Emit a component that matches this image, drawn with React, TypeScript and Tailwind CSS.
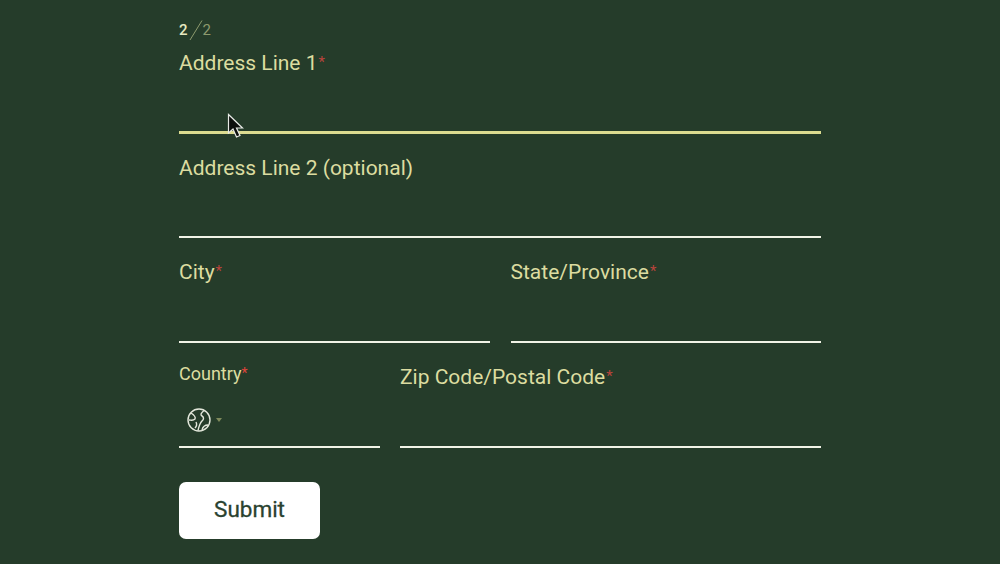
import React from 'react';

const font = { fontFamily: 'Roboto, "Liberation Sans", sans-serif' };

function Field({ label, optional, className, active, lineGap }: { label: string; optional?: boolean; className?: string; active?: boolean; lineGap?: string }) {
  return (
    <div className={`flex flex-col ${className ?? ''}`}>
      <div className="h-[28px] text-[21px] leading-[28px] text-[#dcdca0] whitespace-nowrap">
        {label}
        {!optional && <span className="relative -top-[3px] ml-[1px] text-[15px] leading-[15px] text-[#b9443c]">*</span>}
      </div>
      <div className={active ? 'mt-[54px] h-[3px] bg-[#dcdc90]' : `${lineGap ?? 'mt-[55px]'} h-[2px] bg-[#f1f3e6]`} />
    </div>
  );
}

export default function App() {
  return (
    <div className="relative h-[564px] w-[1000px] overflow-hidden bg-[#253c2a]" style={font}>
      <div className="mx-auto flex w-[642px] flex-col pt-[16px]">
        <div className="flex h-[33px] items-start pt-[4px] text-[15px] leading-[20px]">
          <span className="font-medium text-[#e6e8c0]">2</span>
          <svg width="15" height="20" viewBox="0 0 15 20">
            <path d="M2 20 L14 0.5" stroke="#8d9a6e" strokeWidth="1" fill="none" />
          </svg>
          <span className="text-[#8d9a6e]">2</span>
        </div>
        <Field label="Address Line 1" active />
        <Field label="Address Line 2 (optional)" optional lineGap="mt-[54px]" className="mt-[20px]" />
        <div className="mt-[20px] flex gap-[21px]">
          <Field label="City" className="flex-1" />
          <Field label="State/Province" className="flex-1" />
        </div>
        <div className="mt-[20px] flex gap-[20px]">
          <div className="flex w-[201px] flex-col">
            <div className="h-[28px] text-[18px] leading-[22px] text-[#dcdca0]">
              Country<span className="relative -top-[2px] text-[14px] leading-[14px] text-[#e0443c]">*</span>
            </div>
            <div className="flex h-[55px] items-center pl-[8px] pt-[2px]">
              <svg width="24" height="24" viewBox="0 0 24 24" fill="none" stroke="#e4e8dc" strokeWidth="1.4">
                <circle cx="12" cy="12" r="11" />
                <path d="M4 5 C7 7 9 9 8 11 C6 13 4 12 2 12 M17 2.5 C14 5 13 7 15 8 C17 9 17 11 15 13 C13 15 12 18 11 22.5 M9 14 C10 16 10 18 8 20 M21 17 C18 17 16 18 15 22" />
              </svg>
              <svg width="6" height="4" viewBox="0 0 6 4" className="ml-[5px]">
                <path d="M0 0 H6 L3 4 Z" fill="#7f8a5c" />
              </svg>
            </div>
            <div className="h-[2px] bg-[#f1f3e6]" />
          </div>
          <Field label="Zip Code/Postal Code" className="flex-1" />
        </div>
        <button className="mt-[34px] h-[57px] w-[141px] rounded-[7px] bg-white pb-[1px] text-[22.5px] text-[#2a4230]" style={{ WebkitTextStroke: '0.3px #2a4230' }}>
          Submit
        </button>
      </div>
      <svg width="18" height="26" viewBox="0 0 18 26" className="absolute left-[227px] top-[113px]">
        <path d="M1.5 1.5 V20 L6 16 L9.5 24 L13 22.5 L9.5 15 H15.5 Z" fill="#0c0f0c" stroke="#e8ebe6" strokeWidth="1.2" />
      </svg>
    </div>
  );
}
